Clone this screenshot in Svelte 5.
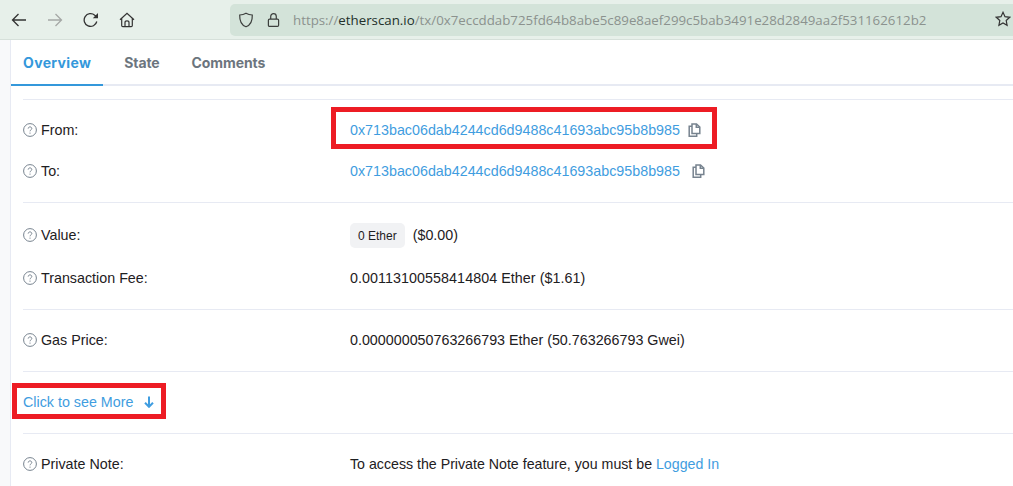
<script>
  const rowsTop = [
    { label: "From:", address: "0x713bac06dab4244cd6d9488c41693abc95b8b985", marked: true },
    { label: "To:", address: "0x713bac06dab4244cd6d9488c41693abc95b8b985" }
  ];
</script>

{#snippet help()}
  <svg class="help" viewBox="0 0 14 14" width="14" height="14" fill="none" stroke="#77838f">
    <circle cx="7" cy="7" r="6.400" />
    <path d="M5.200 5.600c0-1 .8-1.700 1.800-1.700s1.800.7 1.800 1.600c0 1.300-1.800 1.400-1.800 2.800" />
    <path d="M7 9.600v1.100" />
  </svg>
{/snippet}

{#snippet copy()}
  <svg class="copy" viewBox="0 0 13 14" width="13" height="14" fill="none" stroke="#77838f" stroke-width="1.500">
    <path d="M4 1h4.500L11.800 4v6.600H4z" />
    <path d="M8.300 1v3.200h3.500" />
    <path d="M4 3.300H1.200v9.900h7.500v-2.600" />
  </svg>
{/snippet}

<div class="toolbar">
  <div class="nav">
    <svg viewBox="0 0 16 16" width="16" height="16" fill="none" stroke="#333" stroke-width="1.300">
      <path d="M15 8H1.500M7.500 2L1.500 8l6 6" />
    </svg>
    <svg viewBox="0 0 16 16" width="16" height="16" fill="none" stroke="#a5a8a6" stroke-width="1.300">
      <path d="M1 8h13.500M8.500 2l6 6-6 6" />
    </svg>
    <svg viewBox="0 0 16 16" width="16" height="16" fill="none" stroke="#333" stroke-width="1.300">
      <path d="M13.800 9.500A6.400 6.400 0 1 1 11.800 3.200L14 5" />
      <path d="M15 1v5.200H9.800z" fill="#333" stroke="none" />
    </svg>
    <svg viewBox="0 0 16 16" width="16" height="16" fill="none" stroke="#333" stroke-width="1.200">
      <path d="M1 7.800L8 1.200l7 6.600M2.700 6.500v7.100c0 .7.400 1.100 1.100 1.100h8.400c.7 0 1.100-.4 1.100-1.100V6.500" />
      <path d="M6 14.600v-4c0-1 .8-1.700 2-1.700s2 .7 2 1.700v4" />
    </svg>
  </div>
  <div class="urlbar">
    <svg viewBox="0 0 16 16" width="16" height="16" fill="none" stroke="#3c3f3d" stroke-width="1.200">
      <path d="M8 1.200c2 1.200 4 1.700 6.300 1.800.2 6-1.900 10.200-6.300 11.800C3.600 13.200 1.500 9 1.700 3 4 2.900 6 2.400 8 1.200z" />
    </svg>
    <svg viewBox="0 0 14 16" width="13" height="16" fill="none" stroke="#3c3f3d" stroke-width="1.300">
      <rect x="1.500" y="7" width="11" height="7.800" rx="1.200" />
      <path d="M4 7V4.200C4 2.400 5.300 1.200 7 1.200s3 1.200 3 3V7" />
    </svg>
    <span class="url">https://<b>etherscan.io</b>/tx/0x7eccddab725fd64b8abe5c89e8aef299c5bab3491e28d2849aa2f531162612b2</span>
  </div>
  <svg class="star" viewBox="0 0 16 16" width="16" height="16" fill="none" stroke="#333" stroke-width="1.200">
    <path d="M8 1.300l2 4.400 4.700.6-3.500 3.200.9 4.800L8 11.900l-4.100 2.400.9-4.800L1.300 6.300 6 5.700z" />
  </svg>
</div>

<div class="page">
  <div class="card">
    <div class="tabs">
      <span class="tab active">Overview</span>
      <span class="tab">State</span>
      <span class="tab">Comments</span>
    </div>

    <div class="body">
      <section class="group addresses">
        {#each rowsTop as row}
          <div class="row">
            <div class="label">{@render help()}{row.label}</div>
            <div class="value">
              <a href="#top" class="link">{row.address}</a>
              <span class:gap-small={row.marked} class="copy-wrap">{@render copy()}</span>
              {#if row.marked}
                <span class="mark mark-from"></span>
              {/if}
            </div>
          </div>
        {/each}
      </section>

      <section class="group money">
        <div class="row">
          <div class="label raised">{@render help()}Value:</div>
          <div class="value"><span class="badge">0 Ether</span><span class="raised">($0.00)</span></div>
        </div>
        <div class="row">
          <div class="label">{@render help()}Transaction Fee:</div>
          <div class="value fee">0.00113100558414804 Ether ($1.61)</div>
        </div>
      </section>

      <section class="group single">
        <div class="row">
          <div class="label">{@render help()}Gas Price:</div>
          <div class="value">0.000000050763266793 Ether (50.763266793 Gwei)</div>
        </div>
      </section>

      <section class="group single more">
        <a href="#top" class="link">Click to see More</a>
        <svg viewBox="0 0 10 12" width="10" height="12" fill="none" stroke="#3f9de0" stroke-width="2">
          <path d="M5 .5v10M1 6.800l4 4 4-4" />
        </svg>
        <span class="mark mark-more"></span>
      </section>

      <section class="group single last">
        <div class="row">
          <div class="label">{@render help()}Private Note:</div>
          <div class="value note">To access the Private Note feature, you must be&nbsp;<a href="#top" class="link">Logged In</a></div>
        </div>
      </section>
    </div>
  </div>
</div>

<style>
  :global(body) {
    margin: 0;
    height: 486px;
    overflow: hidden;
    background: #fff;
  }

  .toolbar {
    height: 39px;
    display: flex;
    align-items: center;
    background: #e7f0ea;
    border-bottom: 1px solid #d6e0da;
    position: relative;
  }

  .nav {
    display: flex;
    align-items: center;
    gap: 20px;
    width: 230px;
    padding-left: 11px;
    box-sizing: border-box;
    flex: none;
  }

  .urlbar {
    flex: 1;
    height: 32px;
    display: flex;
    align-items: center;
    gap: 13px;
    padding-left: 8px;
    background: #d3e3d9;
    border-radius: 5px 0 0 5px;
    min-width: 0;
  }

  .url {
    font: 13.300px "Open Sans", sans-serif;
    color: #8b928e;
    white-space: nowrap;
  }

  .url b {
    font-weight: 400;
    color: #22302a;
  }

  .star {
    position: absolute;
    right: 2px;
    top: 11px;
  }

  .page {
    background: #f8f9fa;
    padding-left: 10px;
    height: 446px;
  }

  .card {
    background: #fff;
    border-left: 1px solid #e7eaf3;
    height: 100%;
    font: 14.300px "Liberation Sans", Arial, sans-serif;
    color: #1e2022;
  }

  .tabs {
    display: flex;
    height: 46px;
    border-bottom: 2px solid #e7eaf3;
    box-sizing: border-box;
  }

  .tab {
    font: 700 14px Inter, sans-serif;
    color: #6c757e;
    letter-spacing: -0.1px;
    padding: 0 11px 2px 21px;
    display: flex;
    align-items: center;
    height: 46px;
    box-sizing: border-box;
  }

  .tab.active {
    color: #3498db;
    letter-spacing: 0.35px;
    padding: 0 12px 0 12px;
    border-bottom: 2px solid #3498db;
  }

  .body {
    padding: 0 0 0 12px;
  }

  .group {
    border-top: 1px solid #e7eaf3;
    margin-top: 13px;
  }

  .group + .group {
    margin-top: 0;
  }

  .row {
    display: flex;
    align-items: center;
  }

  .label {
    width: 327px;
    flex: none;
    display: flex;
    align-items: center;
    gap: 4px;
  }

  .raised {
    padding-bottom: 2px;
  }

  .help {
    flex: none;
  }

  .value {
    display: flex;
    align-items: center;
    position: relative;
    white-space: pre;
  }

  .fee {
    letter-spacing: 0.06px;
  }

  .note {
    font-size: 14.200px;
  }

  .link {
    color: #3f9de0;
    text-decoration: none;
  }

  .copy-wrap {
    display: flex;
    margin-left: 12px;
  }

  .copy-wrap.gap-small {
    margin-left: 8px;
  }

  .addresses {
    height: 103px;
    box-sizing: border-box;
    padding-top: 22px;
    display: flex;
    flex-direction: column;
    gap: 25px;
  }

  .money {
    height: 107px;
    box-sizing: border-box;
    padding-top: 20px;
    display: flex;
    flex-direction: column;
    gap: 22px;
  }

  .badge {
    background: #f1f2f4;
    border-radius: 5px;
    font-size: 12px;
    padding: 0 8px;
    height: 25px;
    display: flex;
    align-items: center;
    margin-right: 8px;
  }

  .single {
    height: 62px;
    box-sizing: border-box;
    display: flex;
    align-items: center;
    padding-bottom: 2px;
  }

  .single .row {
    width: 100%;
  }

  .more {
    gap: 11px;
    position: relative;
  }

  .mark {
    position: absolute;
    border: 5px solid #ed1c24;
    box-sizing: border-box;
  }

  .mark-from {
    left: -19px;
    top: -15px;
    width: 386px;
    height: 42px;
  }

  .mark-more {
    left: -11px;
    top: 11px;
    width: 154px;
    height: 36px;
  }
</style>
